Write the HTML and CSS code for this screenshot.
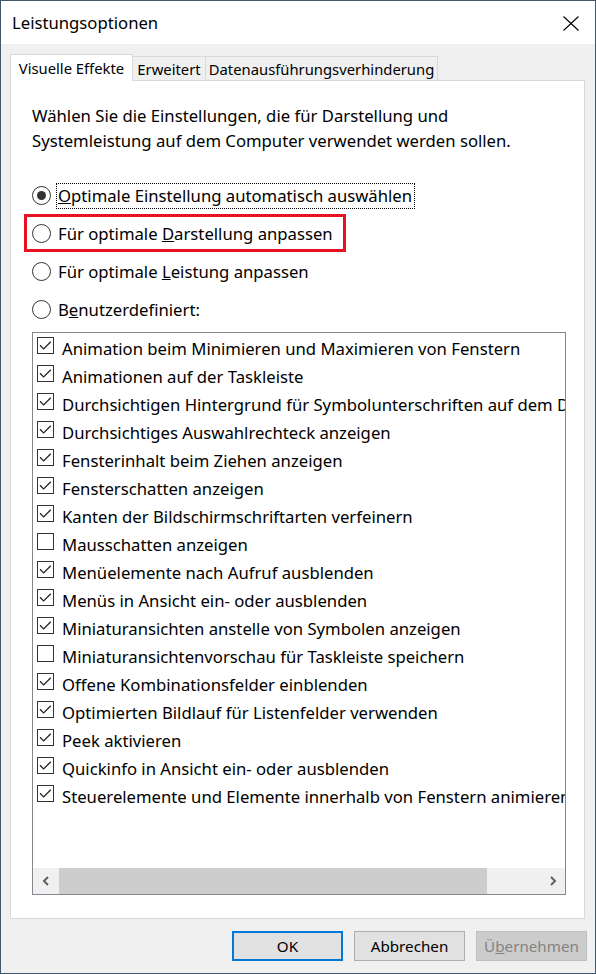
FILE: index.html
```html
<!DOCTYPE html>
<html lang="de">
<head>
<meta charset="utf-8">
<title>Leistungsoptionen</title>
<link rel="stylesheet" href="styles.css">
</head>
<body>
<div class="window">
  <div class="titlebar">
    <span class="title">Leistungsoptionen</span>
    <svg class="close" width="16" height="15" viewBox="0 0 16 15"><path d="M0.5 0.5 L15.5 14.5 M15.5 0.5 L0.5 14.5" stroke="#000" stroke-width="1.1" fill="none"/></svg>
  </div>
  <div class="content">
    <div class="tabs">
      <div class="tab active">Visuelle Effekte</div>
      <div class="tab t2">Erweitert</div>
      <div class="tab t3">Datenausführungsverhinderung</div>
    </div>
    <div class="panel">
      <p class="desc">Wählen Sie die Einstellungen, die für Darstellung und<br>Systemleistung auf dem Computer verwendet werden sollen.</p>
      <div class="radios">
        <div class="radio-row"><span class="radio checked"></span><span class="rlabel focus"><u>O</u>ptimale Einstellung automatisch auswählen</span></div>
        <div class="radio-row hl"><span class="radio"></span><span class="rlabel">Für optimale <u>D</u>arstellung anpassen</span></div>
        <div class="radio-row"><span class="radio"></span><span class="rlabel">Für optimale <u>L</u>eistung anpassen</span></div>
        <div class="radio-row"><span class="radio"></span><span class="rlabel">B<u>e</u>nutzerdefiniert:</span></div>
      </div>
      <div class="list">
        <div class="items">
          <div class="item"><span class="cb on"></span><span class="itext">Animation beim Minimieren und Maximieren von Fenstern</span></div>
          <div class="item"><span class="cb on"></span><span class="itext">Animationen auf der Taskleiste</span></div>
          <div class="item"><span class="cb on"></span><span class="itext">Durchsichtigen Hintergrund für Symbolunterschriften auf dem Desktop</span></div>
          <div class="item"><span class="cb on"></span><span class="itext">Durchsichtiges Auswahlrechteck anzeigen</span></div>
          <div class="item"><span class="cb on"></span><span class="itext">Fensterinhalt beim Ziehen anzeigen</span></div>
          <div class="item"><span class="cb on"></span><span class="itext">Fensterschatten anzeigen</span></div>
          <div class="item"><span class="cb on"></span><span class="itext">Kanten der Bildschirmschriftarten verfeinern</span></div>
          <div class="item"><span class="cb"></span><span class="itext">Mausschatten anzeigen</span></div>
          <div class="item"><span class="cb on"></span><span class="itext">Menüelemente nach Aufruf ausblenden</span></div>
          <div class="item"><span class="cb on"></span><span class="itext">Menüs in Ansicht ein- oder ausblenden</span></div>
          <div class="item"><span class="cb on"></span><span class="itext">Miniaturansichten anstelle von Symbolen anzeigen</span></div>
          <div class="item"><span class="cb"></span><span class="itext">Miniaturansichtenvorschau für Taskleiste speichern</span></div>
          <div class="item"><span class="cb on"></span><span class="itext">Offene Kombinationsfelder einblenden</span></div>
          <div class="item"><span class="cb on"></span><span class="itext">Optimierten Bildlauf für Listenfelder verwenden</span></div>
          <div class="item"><span class="cb on"></span><span class="itext">Peek aktivieren</span></div>
          <div class="item"><span class="cb on"></span><span class="itext">Quickinfo in Ansicht ein- oder ausblenden</span></div>
          <div class="item"><span class="cb on"></span><span class="itext">Steuerelemente und Elemente innerhalb von Fenstern animieren</span></div>
        </div>
        <div class="hscroll">
          <div class="sbtn"><svg width="8" height="10" viewBox="0 0 8 10"><path d="M6 1 L2 5 L6 9" stroke="#606060" stroke-width="2" fill="none"/></svg></div>
          <div class="track"><div class="thumb"></div></div>
          <div class="sbtn"><svg width="8" height="10" viewBox="0 0 8 10"><path d="M2 1 L6 5 L2 9" stroke="#606060" stroke-width="2" fill="none"/></svg></div>
        </div>
      </div>
    </div>
    <div class="buttons">
      <div class="btn default">OK</div>
      <div class="btn">Abbrechen</div>
      <div class="btn disabled"><span>Ü<u>b</u>ernehmen</span></div>
    </div>
  </div>
</div>
</body>
</html>
```
FILE: styles.css
```css
* { box-sizing: border-box; }
html, body { margin: 0; padding: 0; background: #f0f0f0; }
body {
  font-family: "Noto Sans", "Open Sans", sans-serif;
  font-size: 16.7px;
  color: #000;
}
.window {
  width: 596px;
  height: 974px;
  border: 1px solid #3f5870;
  display: flex;
  flex-direction: column;
  background: #f0f0f0;
}
.titlebar {
  height: 43px;
  background: #fff;
  display: flex;
  align-items: center;
  justify-content: space-between;
  padding: 0 16px 0 11px;
  flex-shrink: 0;
}
.title { font-size: 16.7px; }
.close { display: block; margin-top: 1px; }
.content {
  flex: 1;
  display: flex;
  flex-direction: column;
  padding: 10px 10px 0 9px;
}
.tabs {
  display: flex;
  align-items: flex-end;
  height: 26px;
}
.tab {
  height: 24px;
  border-top: 1px solid #d9d9d9;
  border-right: 1px solid #d9d9d9;
  background: #f0f0f0;
  display: flex;
  align-items: center;
  justify-content: center;
  font-size: 14.8px;
  white-space: nowrap;
}
.tab.active {
  position: relative;
  z-index: 1;
  height: 27px;
  margin-bottom: -1px;
  width: 123px;
  border-left: 1px solid #d9d9d9;
  background: #fff;
  padding-bottom: 1px;
}
.tab.t2 { width: 73px; }
.tab.t3 { width: 232px; }
.panel {
  height: 839px;
  border: 1px solid #d9d9d9;
  background: #fff;
  padding: 0 18px 0 21px;
  display: flex;
  flex-direction: column;
}
.desc {
  margin: 22px 0 0 0;
  line-height: 25px;
}
.radios {
  margin-top: 30px;
  display: flex;
  flex-direction: column;
  gap: 12px;
}
.radio-row {
  height: 26px;
  display: flex;
  align-items: center;
  align-self: flex-start;
}
.radio {
  width: 19px;
  height: 19px;
  border: 1px solid #333;
  border-radius: 50%;
  display: flex;
  align-items: center;
  justify-content: center;
  margin-right: 5px;
  margin-top: -2px;
  flex-shrink: 0;
}
.radio.checked::after {
  content: "";
  width: 9px;
  height: 9px;
  border-radius: 50%;
  background: #333;
}
.rlabel {
  display: block;
  height: 26px;
  line-height: 24px;
  border: 1px dotted transparent;
  padding: 0 2px 0 1px;
  white-space: nowrap;
}
.rlabel.focus { border-color: #000; }
.hl {
  width: 316px;
  padding: 4px 0 2px 5px;
  margin: -4px 0 -2px -5px;
  height: 32px;
  outline: 3px solid #e81123;
}
.list {
  margin-top: 9px;
  width: 534px;
  height: 563px;
  border: 1px solid #828790;
  display: flex;
  flex-direction: column;
  overflow: hidden;
}
.items {
  flex: 1;
  overflow: hidden;
}
.item {
  height: 28px;
  display: flex;
  align-items: flex-start;
  white-space: nowrap;
  padding-left: 4px;
}
.cb {
  width: 17px;
  height: 17px;
  border: 1px solid #333;
  margin: 4px 8px 0 0;
  flex-shrink: 0;
  background: #fff;
}
.cb.on {
  background: #fff url("data:image/svg+xml,%3Csvg xmlns='http://www.w3.org/2000/svg' width='15' height='15' viewBox='0 0 15 15'%3E%3Cpath d='M2 7.3 L5.6 10.9 L12.8 3.7' stroke='%23222' stroke-width='1.3' fill='none'/%3E%3C/svg%3E") no-repeat center;
}
.itext {
  line-height: 28px;
  padding-top: 2px;
}
.hscroll {
  height: 26px;
  background: #f0f0f0;
  display: flex;
  flex-shrink: 0;
}
.sbtn {
  width: 25px;
  display: flex;
  align-items: center;
  justify-content: center;
}
.track {
  flex: 1;
  display: flex;
}
.thumb {
  width: 428px;
  background: #cdcdcd;
  margin-left: 1px;
}
.buttons {
  display: flex;
  justify-content: flex-end;
  gap: 11px;
  margin-top: 12px;
  margin-right: -2px;
}
.btn {
  width: 111px;
  height: 30px;
  background: #e1e1e1;
  border: 1px solid #adadad;
  display: flex;
  align-items: center;
  justify-content: center;
  font-size: 15.2px;
}
.btn.default { border: 2px solid #0078d7; }
.btn.disabled {
  background: #cccccc;
  border-color: #bfbfbf;
  color: #838383;
}
```
